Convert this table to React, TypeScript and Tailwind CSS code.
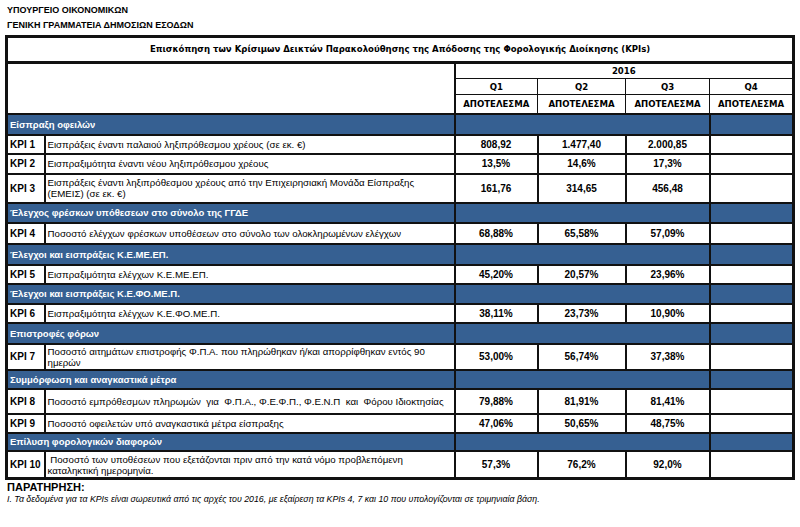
import React from "react";

type Row =
  | { kind: "section"; title: string; h: number }
  | { kind: "kpi"; id: string; text: React.ReactNode; q1: string; q2: string; q3: string; h: number };

const rows: Row[] = [
  { kind: "section", title: "Είσπραξη οφειλών", h: 21 },
  { kind: "kpi", id: "KPI 1", text: "Εισπράξεις έναντι παλαιού ληξιπρόθεσμου χρέους (σε εκ. €)", q1: "808,92", q2: "1.477,40", q3: "2.000,85", h: 19 },
  { kind: "kpi", id: "KPI 2", text: "Εισπραξιμότητα έναντι νέου ληξιπρόθεσμου χρέους", q1: "13,5%", q2: "14,6%", q3: "17,3%", h: 20 },
  {
    kind: "kpi",
    id: "KPI 3",
    text: (
      <>
        Εισπράξεις έναντι ληξιπρόθεσμου χρέους από την Επιχειρησιακή Μονάδα Είσπραξης
        <br />
        (ΕΜΕΙΣ) (σε εκ. €)
      </>
    ),
    q1: "161,76",
    q2: "314,65",
    q3: "456,48",
    h: 29,
  },
  { kind: "section", title: "Έλεγχος φρέσκων υπόθεσεων στο σύνολο της ΓΓΔΕ", h: 20 },
  { kind: "kpi", id: "KPI 4", text: "Ποσοστό ελέγχων φρέσκων υποθέσεων στο σύνολο των ολοκληρωμένων ελέγχων", q1: "68,88%", q2: "65,58%", q3: "57,09%", h: 21 },
  { kind: "section", title: "Έλεγχοι και εισπράξεις Κ.Ε.ΜΕ.ΕΠ.", h: 21 },
  { kind: "kpi", id: "KPI 5", text: "Εισπραξιμότητα ελέγχων Κ.Ε.ΜΕ.ΕΠ.", q1: "45,20%", q2: "20,57%", q3: "23,96%", h: 19 },
  { kind: "section", title: "Έλεγχοι και εισπράξεις Κ.Ε.ΦΟ.ΜΕ.Π.", h: 20 },
  { kind: "kpi", id: "KPI 6", text: "Εισπραξιμότητα ελέγχων Κ.Ε.ΦΟ.ΜΕ.Π.", q1: "38,11%", q2: "23,73%", q3: "10,90%", h: 19 },
  { kind: "section", title: "Επιστροφές φόρων", h: 21 },
  {
    kind: "kpi",
    id: "KPI 7",
    text: (
      <>
        Ποσοστό αιτημάτων επιστροφής Φ.Π.Α. που πληρώθηκαν ή/και απορρίφθηκαν εντός 90
        <br />
        ημερών
      </>
    ),
    q1: "53,00%",
    q2: "56,74%",
    q3: "37,38%",
    h: 26,
  },
  { kind: "section", title: "Συμμόρφωση και αναγκαστικά μέτρα", h: 19 },
  {
    kind: "kpi",
    id: "KPI 8",
    text: "Ποσοστό εμπρόθεσμων πληρωμών\u00a0 για\u00a0 Φ.Π.Α., Φ.Ε.Φ.Π., Φ.Ε.Ν.Π\u00a0 και\u00a0 Φόρου Ιδιοκτησίας",
    q1: "79,88%",
    q2: "81,91%",
    q3: "81,41%",
    h: 25,
  },
  { kind: "kpi", id: "KPI 9", text: "Ποσοστό οφειλετών υπό αναγκαστικά μέτρα είσπραξης", q1: "47,06%", q2: "50,65%", q3: "48,75%", h: 19 },
  { kind: "section", title: "Επίλυση φορολογικών διαφορών", h: 18 },
  {
    kind: "kpi",
    id: "KPI 10",
    text: (
      <>
        {"\u00a0"}Ποσοστό των υποθέσεων που εξετάζονται πριν από την κατά νόμο προβλεπόμενη
        <br />
        καταληκτική ημερομηνία.
      </>
    ),
    q1: "57,3%",
    q2: "76,2%",
    q3: "92,0%",
    h: 28,
  },
];

// header cells use a Tahoma-like condensed face
const hd =
  "font-['DejaVu_Sans_Condensed','DejaVu_Sans',sans-serif] [font-stretch:condensed] font-bold text-[9.5px] text-black text-center border border-[#111] p-0";
const cell = "border-2 border-[#111] p-0";

export default function App() {
  return (
    <div className="w-[800px] h-[527px] bg-white text-black font-['Liberation_Sans',Arial,sans-serif] px-[5px] overflow-hidden">
      {/* Ministry heading */}
      <div className="pt-[5px] pl-[2px] text-[9px] font-bold leading-[10px]">ΥΠΟΥΡΓΕΙΟ ΟΙΚΟΝΟΜΙΚΩΝ</div>
      <div className="pt-[5px] pl-[2px] text-[9px] font-bold leading-[10px]">ΓΕΝΙΚΗ ΓΡΑΜΜΑΤΕΙΑ ΔΗΜΟΣΙΩΝ ΕΣΟΔΩΝ</div>

      <table className="mt-[5px] w-[787px] table-fixed border-collapse border-[3px] border-[#111]">
        <colgroup>
          <col className="w-[38px]" />
          <col className="w-[410px]" />
          <col className="w-[83px]" />
          <col className="w-[88px]" />
          <col className="w-[84px]" />
          <col className="w-[84px]" />
        </colgroup>
        <tbody>
          <tr className="h-[26px]">
            <td
              colSpan={6}
              className="font-['DejaVu_Sans_Condensed','DejaVu_Sans',sans-serif] [font-stretch:condensed] font-bold text-[9.5px] text-center border-b-[3px] border-[#111] p-0"
            >
              Επισκόπηση των Κρίσιμων Δεικτών Παρακολούθησης της Απόδοσης της Φορολογικής Διοίκησης (KPIs)
            </td>
          </tr>
          <tr className="h-[16px]">
            <td colSpan={2} rowSpan={3} className="border-r-2 border-[#111] p-0" />
            <td colSpan={4} className={hd}>2016</td>
          </tr>
          <tr className="h-[16px]">
            <td className={hd}>Q1</td>
            <td className={hd}>Q2</td>
            <td className={hd}>Q3</td>
            <td className={hd}>Q4</td>
          </tr>
          <tr className="h-[19px]">
            <td className={hd}>ΑΠΟΤΕΛΕΣΜΑ</td>
            <td className={hd}>ΑΠΟΤΕΛΕΣΜΑ</td>
            <td className={hd}>ΑΠΟΤΕΛΕΣΜΑ</td>
            <td className={hd}>ΑΠΟΤΕΛΕΣΜΑ</td>
          </tr>
          {rows.map((r, i) =>
            r.kind === "section" ? (
              <tr key={i} style={{ height: r.h }} className="bg-[#366092]">
                <td colSpan={2} className={`${cell} text-white font-bold text-[9.5px] pl-[2px] leading-none`}>
                  {r.title}
                </td>
                <td colSpan={3} className={cell} />
                <td className={cell} />
              </tr>
            ) : (
              <tr key={i} style={{ height: r.h }}>
                <td className={`${cell} font-bold text-[10px] pl-[2px] whitespace-nowrap`}>{r.id}</td>
                <td className={`${cell} text-[9.7px] pl-[2px] leading-[11px] whitespace-nowrap`}>{r.text}</td>
                <td className={`${cell} font-bold text-[10px] text-center`}>{r.q1}</td>
                <td className={`${cell} font-bold text-[10px] text-center`}>{r.q2}</td>
                <td className={`${cell} font-bold text-[10px] text-center`}>{r.q3}</td>
                <td className={cell} />
              </tr>
            )
          )}
        </tbody>
      </table>

      <div className="pl-[2px] pt-[1px] text-[11px] font-bold leading-[12px]">ΠΑΡΑΤΗΡΗΣΗ:</div>
      <div className="pl-[2px] pt-[1px] text-[8.8px] italic leading-[11px]">
        Ι. Τα δεδομένα για τα KPIs είναι σωρευτικά από τις αρχές του 2016, με εξαίρεση τα KPIs 4, 7 και 10 που υπολογίζονται σε τριμηνιαία βάση.
      </div>
    </div>
  );
}
